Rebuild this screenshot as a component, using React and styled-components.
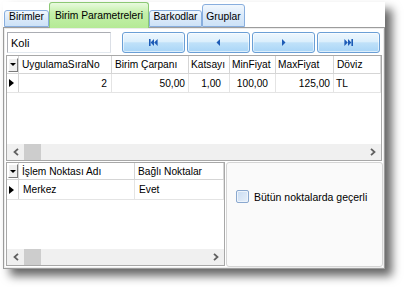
import React from 'react'
import styled, { createGlobalStyle } from 'styled-components'

const GlobalStyle = createGlobalStyle`
  html, body { margin: 0; padding: 0; background: #fff; }
  body {
    font-family: "Liberation Sans", Arial, sans-serif;
    font-size: 10px;
    color: #000;
  }
  * { box-sizing: border-box; }
`

const Page = styled.div`
  width: 404px;
  height: 287px;
  padding: 2px 0 0 3px;
`

const Frame = styled.div`
  width: 382px;
  height: 267px;
  display: flex;
  flex-direction: column;
  box-shadow: 7px 7px 9px rgba(0, 0, 0, 0.6);
  background: #fff;
`

const TabStrip = styled.div`
  height: 25px;
  display: flex;
  align-items: flex-end;
  padding-left: 1px;
  position: relative;
  z-index: 1;
`

const Tab = styled.div`
  width: ${p => p.$w}px;
  height: ${p => (p.$active ? p.$h + 1 : p.$h)}px;
  margin-bottom: ${p => (p.$active ? -1 : 0)}px;
  padding-top: ${p => p.$pad}px;
  line-height: 12px;
  font-size: 10.3px;
  text-align: center;
  white-space: nowrap;
  border: 1px solid ${p => (p.$active ? '#8cc874' : '#88aede')};
  border-bottom: ${p => (p.$active ? 'none' : '1px solid #88aede')};
  border-radius: 3px 3px 0 0;
  background: ${p =>
    p.$active
      ? 'linear-gradient(#e9fadf, #c4f0aa 40%, #b5ea96)'
      : 'linear-gradient(#f1f7fd, #dbeafa 50%, #cde2f7)'};
`

const Panel = styled.div`
  height: 242px;
  border: 1px solid #9c9c9c;
  box-shadow: inset 0 0 0 1px #ececec;
  padding: 4px 1px 1px 2px;
  display: flex;
  flex-direction: column;
`

const TopRow = styled.div`
  height: 21px;
  display: flex;
  padding-left: 1px;
`

const TextBox = styled.div`
  width: 104px;
  height: 21px;
  border: 1px solid #abadb3;
  border-right-color: #dbdfe6;
  border-bottom-color: #e3e9ef;
  padding-left: 3px;
  display: flex;
  align-items: center;
  font-size: 11px;
`

const Navigator = styled.div`
  margin-left: 11px;
  display: flex;
  gap: 2px;
`

const NavButton = styled.div`
  width: 63px;
  height: 21px;
  border: 1px solid #6a9fd6;
  border-radius: 3px;
  box-shadow: inset 0 0 0 1px rgba(255, 255, 255, 0.6);
  background: linear-gradient(#eef7fe 0%, #dcefFC 45%, #c0e1f9 52%, #a9d5f7 100%);
  display: flex;
  align-items: center;
  justify-content: center;
`

const Grid = styled.div`
  width: ${p => p.$w}px;
  height: ${p => p.$h}px;
  border: 1px solid #a8a8a8;
  background: #fff;
  display: flex;
  flex-direction: column;
  margin-top: ${p => p.$mt || 0}px;
`

const Row = styled.div`
  display: grid;
  grid-template-columns: ${p => p.$cols};
  height: ${p => p.$h}px;
  border-bottom: 1px solid ${p => (p.$head ? '#d5d5d5' : '#e4e4e4')};
`

const Cell = styled.div`
  border-right: 1px solid ${p => (p.$head ? '#d5d5d5' : '#e4e4e4')};
  display: flex;
  align-items: center;
  justify-content: ${p => (p.$right ? 'flex-end' : 'flex-start')};
  padding: 0 ${p => (p.$pr !== undefined ? p.$pr : 3)}px 0 ${p => (p.$pl !== undefined ? p.$pl : 3)}px;
  white-space: nowrap;
  overflow: hidden;
  font-size: 10.2px;
`

const IndicatorCell = styled.div`
  border-right: 1px solid #d5d5d5;
  display: flex;
  align-items: center;
  justify-content: center;
`

const DropButton = styled.div`
  width: 10px;
  height: 14px;
  background: #f0f0f0;
  border: 1px solid;
  border-color: #fff #7a7a7a #7a7a7a #fff;
  display: flex;
  align-items: center;
  justify-content: center;

  &::after {
    content: '';
    border-top: 3px solid #000;
    border-left: 3px solid transparent;
    border-right: 3px solid transparent;
  }
`

const CurrentMark = styled.div`
  width: 0;
  height: 0;
  border-left: 5px solid #000;
  border-top: 4px solid transparent;
  border-bottom: 4px solid transparent;
  margin-right: 2px;
`

const GridBody = styled.div`
  flex: 1;
`

const HScroll = styled.div`
  height: 16px;
  background: #f0f0f0;
  display: flex;
  align-items: stretch;
`

const ScrollArrow = styled.div`
  width: 17px;
  display: flex;
  align-items: center;
  justify-content: center;
`

const Thumb = styled.div`
  width: 17px;
  background: #cdcdcd;
`

const Track = styled.div`
  flex: 1;
`

const Lower = styled.div`
  margin-top: 1px;
  height: 105px;
  display: flex;
  gap: 1px;
`

const OptionsBox = styled.div`
  width: 157px;
  height: 105px;
  background: #fafafa;
  border: 1px solid #d5d5d5;
  border-radius: 3px;
  padding: 27px 0 0 9px;
`

const CheckRow = styled.label`
  display: flex;
  align-items: center;
  gap: 5px;
  font-size: 10.5px;
`

const CheckBox = styled.span`
  width: 13px;
  height: 13px;
  border: 1px solid #8aa8cf;
  border-radius: 2px;
  background: linear-gradient(135deg, #c9dcf2, #e7f0fa);
  box-shadow: inset 0 0 0 1px #eef4fb;
`

const Chevron = ({ dir }) => (
  <svg width="6" height="8" viewBox="0 0 6 8">
    <polyline
      points={dir === 'left' ? '5,0.8 1.5,4 5,7.2' : '1,0.8 4.5,4 1,7.2'}
      fill="none"
      stroke="#606060"
      strokeWidth="1.8"
    />
  </svg>
)

const NavIcon = ({ kind }) => {
  const c = '#1d5bb6'
  return (
    <svg width="9" height="7" viewBox="0 0 9 7">
      {kind === 'first' && (
        <>
          <rect x="0" y="0" width="1.6" height="7" fill={c} />
          <polygon points="5,0 1.6,3.5 5,7" fill={c} />
          <polygon points="8.6,0 5.2,3.5 8.6,7" fill={c} />
        </>
      )}
      {kind === 'prev' && <polygon points="6,0 2.5,3.5 6,7" fill={c} />}
      {kind === 'next' && <polygon points="3,0 6.5,3.5 3,7" fill={c} />}
      {kind === 'last' && (
        <>
          <polygon points="0.4,0 3.8,3.5 0.4,7" fill={c} />
          <polygon points="4,0 7.4,3.5 4,7" fill={c} />
          <rect x="7.4" y="0" width="1.6" height="7" fill={c} />
        </>
      )}
    </svg>
  )
}

const ScrollBar = () => (
  <HScroll>
    <ScrollArrow><Chevron dir="left" /></ScrollArrow>
    <Thumb />
    <Track />
    <ScrollArrow><Chevron dir="right" /></ScrollArrow>
  </HScroll>
)

const upperCols = '12px 93px 77px 41px 46px 58px 47px'
const lowerCols = '12px 116px 89px'

const App = () => (
  <Page>
    <GlobalStyle />
    <Frame>
      <TabStrip>
        <Tab $w={45} $h={17} $pad={0}>Birimler</Tab>
        <Tab $w={100} $h={25} $pad={7} $active>Birim Parametreleri</Tab>
        <Tab $w={53} $h={17} $pad={0}>Barkodlar</Tab>
        <Tab $w={43} $h={23} $pad={6}>Gruplar</Tab>
      </TabStrip>
      <Panel>
        <TopRow>
          <TextBox>Koli</TextBox>
          <Navigator>
            <NavButton><NavIcon kind="first" /></NavButton>
            <NavButton><NavIcon kind="prev" /></NavButton>
            <NavButton><NavIcon kind="next" /></NavButton>
            <NavButton><NavIcon kind="last" /></NavButton>
          </Navigator>
        </TopRow>

        <Grid $w={376} $h={106} $mt={2}>
          <Row $cols={upperCols} $h={18} $head>
            <IndicatorCell><DropButton /></IndicatorCell>
            <Cell $head>UygulamaSıraNo</Cell>
            <Cell $head>Birim Çarpanı</Cell>
            <Cell $head $pl={2}>Katsayı</Cell>
            <Cell $head $pl={2}>MinFiyat</Cell>
            <Cell $head $pl={2}>MaxFiyat</Cell>
            <Cell $head>Döviz</Cell>
          </Row>
          <Row $cols={upperCols} $h={19}>
            <IndicatorCell><CurrentMark /></IndicatorCell>
            <Cell $right $pr={4}>2</Cell>
            <Cell $right $pr={3}>50,00</Cell>
            <Cell $right $pr={8}>1,00</Cell>
            <Cell $right $pr={7}>100,00</Cell>
            <Cell $right $pr={3}>125,00</Cell>
            <Cell $pl={2}>TL</Cell>
          </Row>
          <GridBody />
          <ScrollBar />
        </Grid>

        <Lower>
          <Grid $w={219} $h={104}>
            <Row $cols={lowerCols} $h={17} $head>
              <IndicatorCell><DropButton /></IndicatorCell>
              <Cell $head>İşlem Noktası Adı</Cell>
              <Cell $head>Bağlı Noktalar</Cell>
            </Row>
            <Row $cols={lowerCols} $h={20}>
              <IndicatorCell><CurrentMark /></IndicatorCell>
              <Cell $pl={4}>Merkez</Cell>
              <Cell $pl={4}>Evet</Cell>
            </Row>
            <GridBody />
            <ScrollBar />
          </Grid>
          <OptionsBox>
            <CheckRow>
              <CheckBox />
              Bütün noktalarda geçerli
            </CheckRow>
          </OptionsBox>
        </Lower>
      </Panel>
    </Frame>
  </Page>
)

export default App
